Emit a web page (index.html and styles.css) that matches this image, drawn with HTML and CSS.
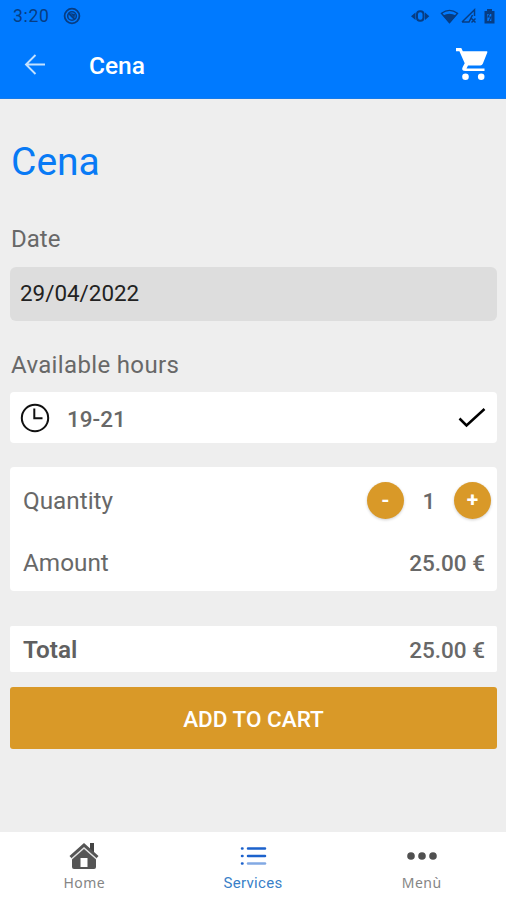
FILE: index.html
```html
<!DOCTYPE html>
<html lang="en">
<head>
<meta charset="utf-8">
<title>Cena</title>
<link rel="stylesheet" href="styles.css">
</head>
<body>
<header class="header">
  <div class="status">
    <span class="time">3:20</span>
    <svg class="notice" width="18" height="18" viewBox="0 0 18 18" fill="none" stroke="currentColor"><circle cx="9" cy="9" r="7.4" stroke-width="1.8"/><circle cx="9" cy="9" r="4.3" stroke-width="1.6"/><path d="M5.5 6l6.2 6.4" stroke-width="1.8"/><path d="M7 6l5 1-.5 4z" fill="currentColor" stroke="none"/></svg>
    <svg class="signals" width="86" height="20" viewBox="0 0 86 20" fill="none" stroke="currentColor"><rect x="6" y="5.2" width="6.500" height="9.600" rx="3" stroke-width="2"/><path d="M4.500 6.500v7.500L0 10.300zM14 6.500v7.500l4.300-3.700z" fill="currentColor" stroke="none"/><path d="M30.500 7.300Q38.500 1.500 46.500 7.300L38.500 16.700z" stroke-width="1.400"/><path d="M32 9.500Q38.500 6 45 9.500L38.500 17z" fill="currentColor" stroke="none"/><path d="M51 16L63.500 3.800V10M51 16H58L61.500 9M60.500 12.500l4 4m0-4l-4 4" stroke-width="1.500"/><path fill-rule="evenodd" d="M73.500 5h2.500V3h5v2h2.500v12.500h-10zM76.300 8v7h4V8z" fill="currentColor" stroke="none"/><path d="M79 7l-2 4h3l-2 4" stroke-width="1.100"/></svg>
  </div>
  <nav class="appbar">
    <svg class="back" width="22" height="22" viewBox="0 0 22 22" fill="none" stroke="currentColor" stroke-width="1.900"><path d="M21 10.500H2.500M11.500 1L2 10.500l9.500 9.500"/></svg>
    <h1 class="title">Cena</h1>
    <svg class="cart" width="32" height="34" viewBox="0 0 32 34" fill="currentColor"><path d="M0 0h5.300l1.500 3.300h23.900q1 0 .6 1.200l-4.500 11.200q-.7 1.700-2.500 1.700H12l-1.500 3.100h18V23H9.500q-4.700 0-2.800-4l2-3.800L3.400 3.200H0z"/><circle cx="9.500" cy="28.700" r="3.300"/><circle cx="25.200" cy="28.700" r="3.300"/></svg>
  </nav>
</header>
<main class="main">
  <h2 class="heading">Cena</h2>
  <div class="label date-label">Date</div>
  <div class="date">29/04/2022</div>
  <div class="label hours-label">Available hours</div>
  <div class="card slot">
    <svg width="30" height="30" viewBox="0 0 30 30" fill="none" stroke="#111" stroke-width="2"><circle cx="15" cy="15" r="13.200"/><path d="M14.300 5.500V15.300H22.500"/></svg>
    <span class="slot-text">19-21</span>
    <svg class="check" width="28" height="22" viewBox="0 0 28 22" fill="none" stroke="#000" stroke-width="2.500"><path d="M1.500 11.500l7 7L26.500 2"/></svg>
  </div>
  <section class="card order">
    <div class="row quantity"><span>Quantity</span><button class="round">-</button><b class="count">1</b><button class="round">+</button></div>
    <div class="row amount"><span>Amount</span><b>25.00 €</b></div>
  </section>
  <div class="card row total"><strong>Total</strong><b>25.00 €</b></div>
  <button class="add">ADD TO CART</button>
</main>
<footer class="tabs">
  <div class="tab"><svg width="30" height="28" viewBox="0 0 30 28"><path d="M21 1h4v12h-4z" fill="#444"/><path d="M3 13.500L15 3l12 10.500V25q0 2-2 2H5q-2 0-2-2z" fill="#555"/><path d="M1.500 15.200L15 3l13.500 12.200" fill="none" stroke="#555" stroke-width="3"/><path d="M2.500 17L15 6l12.500 11" fill="none" stroke="#e4e4e4" stroke-width="1.500"/><path d="M11.500 16h7v9h-7z" fill="#fff"/></svg><span>Home</span></div>
  <div class="tab active"><svg width="30" height="28" viewBox="0 0 30 28" stroke-width="2.500" stroke-linecap="round"><path d="M4 6.500h.5M10 6.500h17M4 14h.5M10 14h17M4 21.500h.5" stroke="#1c62cc"/><path d="M10 21.500h17" stroke="#82a9e3"/></svg><span>Services</span></div>
  <div class="tab"><svg width="30" height="28" viewBox="0 0 30 28" fill="#505050"><circle cx="4" cy="14" r="3.800"/><circle cx="15" cy="14" r="3.800"/><circle cx="26" cy="14" r="3.800"/></svg><span>Menù</span></div>
</footer>
</body>
</html>
```
FILE: styles.css
```css
* { box-sizing: border-box; }
body {
  margin: 0;
  height: 900px;
  display: flex;
  flex-direction: column;
  overflow: hidden;
  background: #eee;
  color: #686868;
  font-family: Roboto, sans-serif;
}
svg { display: block; flex: none; }
button { border: 0; padding: 0; font-family: inherit; color: #fff; background: #d99928; }
.header { height: 99px; flex: none; background: #007aff; border-bottom: 1px solid #167bea; }
.status { height: 32px; padding: 0 9px 0 13px; display: flex; align-items: center; color: #073d83; }
.time { font-size: 17.500px; letter-spacing: .7px; }
.notice { margin-left: 13px; }
.signals { margin-left: auto; }
.appbar { height: 66px; display: flex; align-items: center; padding: 0 18px 0 24px; color: #fff; }
.back { color: #c3e1ff; }
.title { margin: 1px 0 0 43px; font-size: 24.500px; font-weight: 500; line-height: 30px; }
.cart { margin-left: auto; }
.main { flex: 1; padding: 39px 9px 0 10px; }
.heading { margin: 0; height: 50px; padding-left: 1px; line-height: 48px; color: #087af5; font-size: 39px; font-weight: 400; }
.label { padding-left: 1px; font-size: 24px; font-weight: 400; line-height: 30px; }
.date-label { margin-top: 36px; }
.date { height: 54px; margin-top: 13px; padding-left: 10px; border-radius: 6px; background: #ddd; color: #222; font-size: 22.400px; line-height: 53px; }
.hours-label { margin-top: 28px; padding-top: 1px; letter-spacing: .350px; }
.card { background: #fff; border-radius: 4px; }
.slot { height: 51px; margin-top: 12px; padding: 0 11px 0 10px; display: flex; align-items: center; }
.slot-text { margin: 2px 0 0 17px; font-size: 22.500px; font-weight: 500; }
.check { margin-left: auto; }
.order { height: 124px; margin-top: 24px; padding-top: 2px; }
.row { display: flex; align-items: center; padding: 0 12px 0 13px; font-size: 24.300px; }
.row > :first-child { margin-right: auto; }
.row b { font-size: 22.500px; font-weight: 500; }
.quantity { height: 63px; padding-right: 6px; }
.quantity .count { width: 50px; text-align: center; }
.round { width: 37px; height: 37px; border-radius: 50%; font-size: 21px; font-weight: 700; line-height: 37px; box-shadow: 0 1px 3px #0003; }
.amount { height: 61px; }
.total { height: 46px; margin-top: 35px; padding-top: 1px; border-radius: 2px; }
.total strong { font-weight: 600; color: #606060; }
.add { display: block; width: 100%; height: 62px; margin-top: 15px; padding-top: 2px; border-radius: 3px; font-size: 22.500px; font-weight: 500; }
.tabs { height: 68px; flex: none; display: grid; grid-template-columns: repeat(3, 1fr); background: #fff; }
.tab { display: flex; flex-direction: column; align-items: center; padding: 10px 0 0; color: #858585; font-family: "Noto Sans", sans-serif; font-size: 14px; line-height: 25px; letter-spacing: .500px; }
.active { color: #397fc8; font-family: Roboto, sans-serif; font-size: 15px; line-height: 27px; letter-spacing: .300px; }
```
